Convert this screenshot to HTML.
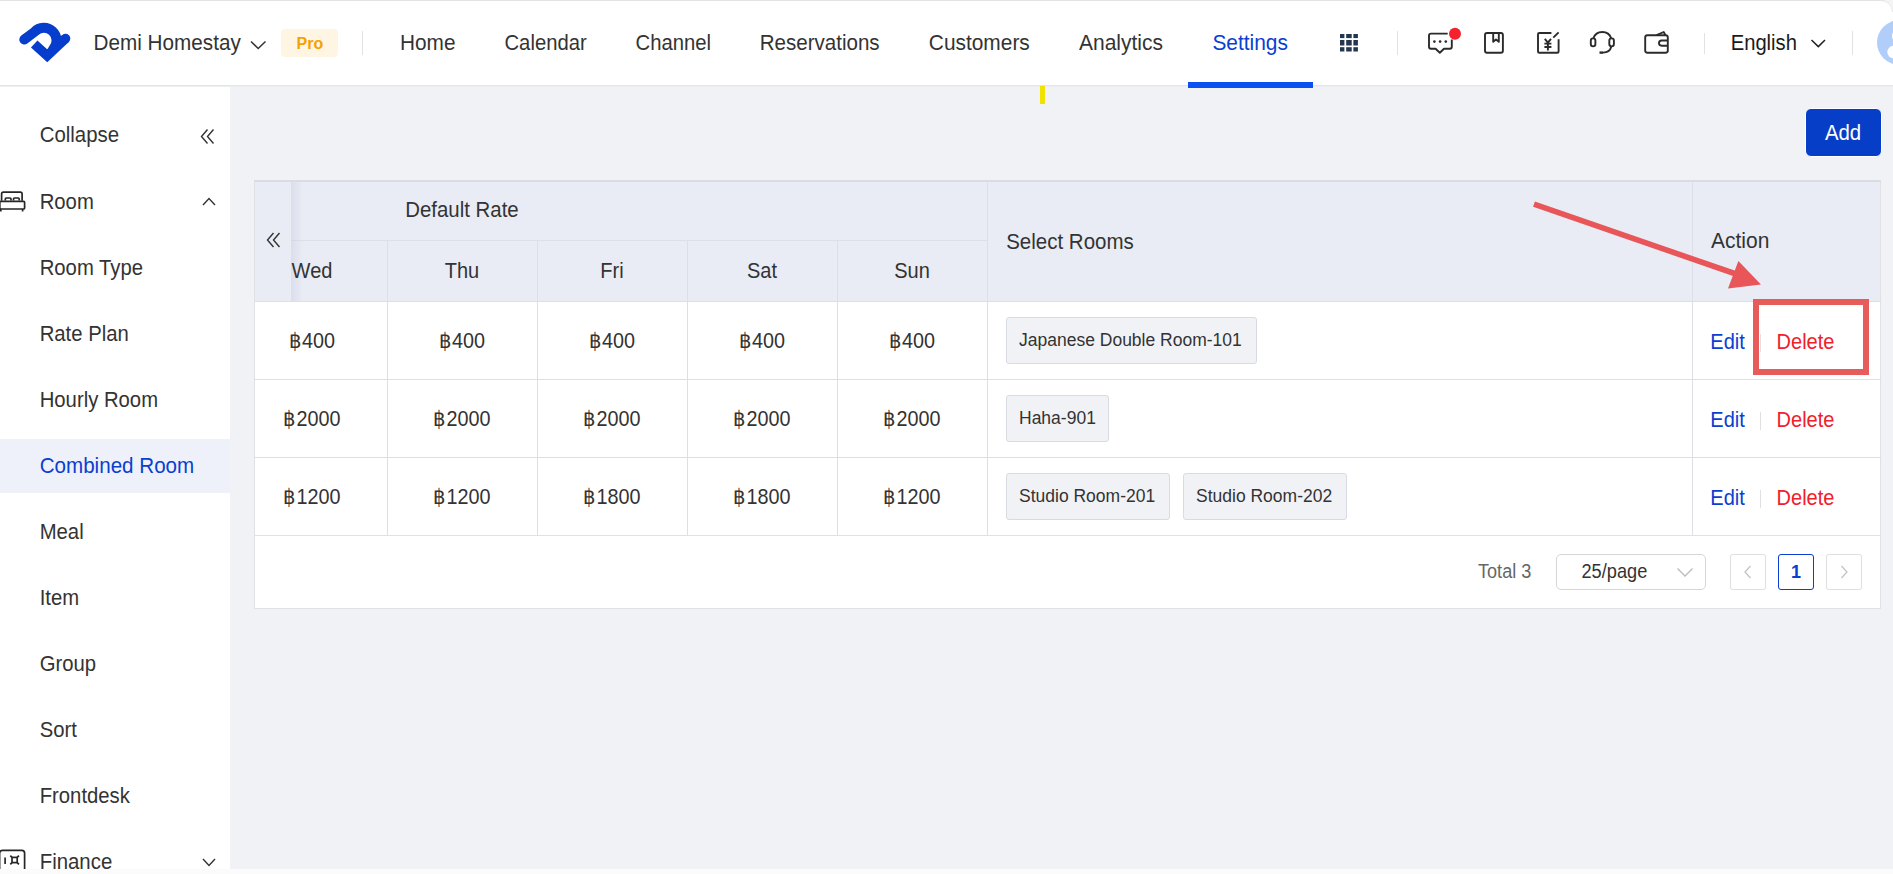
<!DOCTYPE html>
<html><head><meta charset="utf-8"><style>
html,body{margin:0;padding:0;}
body{width:1893px;height:874px;overflow:hidden;position:relative;background:#f1f2f6;font-family:"Liberation Sans", sans-serif;}
.t{position:absolute;white-space:nowrap;}
.r{position:absolute;}
svg.r{overflow:visible;}
</style></head><body>
<div class="r" style="left:0px;top:0px;width:1893px;height:87px;background:#fff;"></div>
<div class="r" style="left:0px;top:0px;width:1893px;height:1px;background:#e3e3e3;"></div>
<div class="r" style="left:0px;top:85px;width:1893px;height:1px;background:#e4e5e9;"></div>
<div class="r" style="left:0px;top:86px;width:1893px;height:1px;background:#eceef2;"></div>
<svg class="r" style="left:1873px;top:0px" width="20" height="20" viewBox="0 0 20 20"><path d="M8 0 A12 12 0 0 1 20 12 L20 0 Z" fill="#f4f4f4"/><path d="M8 0.5 A11.5 11.5 0 0 1 19.5 12" fill="none" stroke="#e6e6e6" stroke-width="1"/></svg>
<svg class="r" style="left:14px;top:18px" width="64" height="50" viewBox="0 0 64 50"><g fill="none" stroke="#063dcc" stroke-width="9.6">
<path d="M10.3 21.6 L20.5 13.9 A12.7 12.7 0 0 1 39.2 31.1" stroke-linecap="round" stroke-width="10"/>
<path d="M20.2 26 L33.2 37.8 L51.5 20.6" stroke-linecap="butt" stroke-linejoin="miter"/>
<circle cx="51.5" cy="20.6" r="4.8" fill="#063dcc" stroke="none"/>
</g></svg>
<div class="t" style="left:93.6px;top:30.18px;font-size:20.7px;line-height:25px;color:#333;font-weight:normal;transform:scaleY(1.07);transform-origin:0 19.67px;">Demi Homestay</div>
<svg class="r" style="left:250px;top:40px" width="17" height="10" viewBox="0 0 17 10"><path d="M1 1.5 L8.2 8.5 L15.5 1.5" fill="none" stroke="#333" stroke-width="1.5"/></svg>
<div class="r" style="left:281px;top:29px;width:57px;height:28px;background:#fff5e3;border-radius:4px;"></div>
<div class="t" style="left:296.5px;top:33.66px;font-size:16px;line-height:19px;color:#f5a200;font-weight:bold;transform:scaleY(1.07);transform-origin:0 15.04px;">Pro</div>
<div class="r" style="left:362px;top:31px;width:1px;height:24px;background:#e2e2e2;"></div>
<div class="t" style="left:400px;top:30.14px;font-size:20.8px;line-height:25px;color:#333;font-weight:normal;transform:scaleY(1.07);transform-origin:0 19.71px;">Home</div>
<div class="t" style="left:504.5px;top:30.83px;font-size:20.25px;line-height:24px;color:#333;font-weight:normal;transform:scaleY(1.07);transform-origin:0 19.02px;">Calendar</div>
<div class="t" style="left:635.5px;top:30.82px;font-size:20.3px;line-height:24px;color:#333;font-weight:normal;transform:scaleY(1.07);transform-origin:0 19.03px;">Channel</div>
<div class="t" style="left:759.7px;top:30.23px;font-size:20.56px;line-height:25px;color:#333;font-weight:normal;transform:scaleY(1.07);transform-origin:0 19.62px;">Reservations</div>
<div class="t" style="left:928.8px;top:30.11px;font-size:20.9px;line-height:25px;color:#333;font-weight:normal;transform:scaleY(1.07);transform-origin:0 19.74px;">Customers</div>
<div class="t" style="left:1079px;top:30.08px;font-size:20.99px;line-height:25px;color:#333;font-weight:normal;transform:scaleY(1.07);transform-origin:0 19.77px;">Analytics</div>
<div class="t" style="left:1212.4px;top:30.11px;font-size:20.9px;line-height:25px;color:#0a40d4;font-weight:normal;transform:scaleY(1.07);transform-origin:0 19.74px;">Settings</div>
<div class="r" style="left:1188px;top:82px;width:125px;height:6px;background:#0c4ff2;"></div>
<div class="r" style="left:1040px;top:85.5px;width:5px;height:18px;background:#f0e200;"></div>
<svg class="r" style="left:1340px;top:34.2px" width="18" height="18" viewBox="0 0 18 18"><rect x="0" y="0" width="4.4" height="4.1" fill="#22364f"/><rect x="0" y="6" width="4.4" height="5.5" fill="#22364f"/><rect x="0" y="13.2" width="4.4" height="4.3" fill="#22364f"/><rect x="6.2" y="0" width="5.5" height="4.1" fill="#22364f"/><rect x="6.2" y="6" width="5.5" height="5.5" fill="#22364f"/><rect x="6.2" y="13.2" width="5.5" height="4.3" fill="#22364f"/><rect x="13.4" y="0" width="4.5" height="4.1" fill="#22364f"/><rect x="13.4" y="6" width="4.5" height="5.5" fill="#22364f"/><rect x="13.4" y="13.2" width="4.5" height="4.3" fill="#22364f"/></svg>
<div class="r" style="left:1397px;top:31px;width:1px;height:24px;background:#e2e2e2;"></div>
<svg class="r" style="left:1425px;top:25px" width="40" height="32" viewBox="0 0 40 32"><g fill="none" stroke="#2b2b2b" stroke-width="1.9" stroke-linejoin="round">
<path d="M22.7 8.6 L6 8.6 Q4 8.6 4 10.6 L4 21.8 Q4 23.8 6 23.8 L10.6 23.8 L14.8 27.8 L19 23.8 L24.8 23.8 Q26.8 23.8 26.8 21.8 L26.8 14.6"/>
</g>
<circle cx="9.4" cy="16.6" r="1.3" fill="#2b2b2b"/><circle cx="15.1" cy="16.6" r="1.3" fill="#2b2b2b"/><circle cx="20.8" cy="16.6" r="1.3" fill="#2b2b2b"/>
<circle cx="30" cy="8.8" r="6" fill="#f5222d"/></svg>
<svg class="r" style="left:1480px;top:28px" width="28" height="30" viewBox="0 0 28 30"><g fill="none" stroke="#2b2b2b" stroke-width="1.9" stroke-linejoin="round">
<rect x="5" y="5" width="17.9" height="19.7" rx="2"/>
<path d="M13.2 5 L13.2 13.8 L16 11.6 L18.8 13.8 L18.8 5"/>
</g></svg>
<svg class="r" style="left:1533px;top:28px" width="30" height="30" viewBox="0 0 30 30"><g fill="none" stroke="#2b2b2b" stroke-width="1.9" stroke-linejoin="round" stroke-linecap="butt">
<path d="M18.4 5 L6.3 5 Q5 5 5 6.3 L5 23.5 Q5 24.8 6.3 24.8 L24.3 24.8 Q25.6 24.8 25.6 23.5 L25.6 11.3"/>
<path d="M20.3 9.6 L25.6 4.3"/>
<path d="M11.8 10.8 L14.9 14.6 L18 10.8 M14.9 14.6 L14.9 22.6 M11.4 15.6 L18.4 15.6 M11.4 19 L18.4 19"/>
</g></svg>
<svg class="r" style="left:1586px;top:28px" width="32" height="30" viewBox="0 0 32 30"><g fill="none" stroke="#2b2b2b" stroke-width="1.9" stroke-linejoin="round">
<path d="M7.3 10.5 A9.5 9.5 0 0 1 25.3 10.5"/>
<rect x="4.8" y="10.4" width="4.6" height="8" rx="2.3"/>
<rect x="23.3" y="10.4" width="4.6" height="8" rx="2.3"/>
<path d="M25.3 18.5 Q24 24.4 17 24.6"/>
<path d="M13.5 24.6 L17 24.6" stroke-width="2.4"/>
</g></svg>
<svg class="r" style="left:1641px;top:28px" width="30" height="30" viewBox="0 0 30 30"><g fill="none" stroke="#2b2b2b" stroke-width="1.9" stroke-linejoin="round">
<rect x="4.2" y="7.2" width="22.6" height="17.6" rx="2.2"/>
<path d="M26.8 12.5 L20.6 12.5 A2.6 2.6 0 0 0 20.6 17.7 L26.8 17.7"/>
<path d="M15.6 7.2 L22.7 4 L24.5 7.2"/>
</g></svg>
<div class="r" style="left:1704px;top:33px;width:1px;height:21px;background:#e2e2e2;"></div>
<div class="t" style="left:1730.7px;top:30.90px;font-size:20.2px;line-height:24px;color:#1a1a1a;font-weight:normal;transform:scaleY(1.07);transform-origin:0 19.00px;">English</div>
<svg class="r" style="left:1810px;top:38px" width="17" height="10" viewBox="0 0 17 10"><path d="M1.5 2 L8.3 8.6 L15 2" fill="none" stroke="#222" stroke-width="1.5"/></svg>
<div class="r" style="left:1852px;top:31px;width:1px;height:24px;background:#e2e2e2;"></div>
<svg class="r" style="left:1877px;top:20px" width="16" height="45" viewBox="0 0 16 45"><circle cx="22.3" cy="22.5" r="22.3" fill="#b1cefa"/><circle cx="22.5" cy="16" r="7.5" fill="#fff"/><rect x="10.3" y="25.8" width="26" height="12.6" rx="6.3" fill="#fff"/></svg>
<div class="r" style="left:0px;top:87px;width:230px;height:782px;background:#fff;"></div>
<div class="r" style="left:0px;top:439px;width:230px;height:54px;background:#eef1fa;"></div>
<div class="t" style="left:39.7px;top:123.43px;font-size:20.4px;line-height:24px;color:#333;font-weight:normal;transform:scaleY(1.07);transform-origin:0 19.07px;">Collapse</div>
<svg class="r" style="left:198px;top:126px" width="20" height="20" viewBox="0 0 20 20"><path d="M9.5 3.5 L3.5 10.5 L9.5 17.5 M15.5 3.5 L9.5 10.5 L15.5 17.5" fill="none" stroke="#333" stroke-width="1.4"/></svg>
<svg class="r" style="left:-2px;top:188px" width="30" height="26" viewBox="0 0 30 26"><g fill="none" stroke="#262626" stroke-width="1.7">
<path d="M3.6 12.8 L3.6 6 Q3.6 4.2 5.4 4.2 L22.3 4.2 Q24.1 4.2 24.1 6 L24.1 12.8"/>
<path d="M7.3 12.6 L7.3 11 Q7.3 10 8.3 10 L12 10 Q13 10 13 11 L13 12.6 M15.5 12.6 L15.5 11 Q15.5 10 16.5 10 L20.2 10 Q21.2 10 21.2 11 L21.2 12.6"/>
<rect x="1.8" y="13.4" width="24.8" height="7.6" rx="1"/>
<path d="M2.8 21 L2.8 23.6 M24.6 21 L24.6 23.6"/>
</g></svg>
<div class="t" style="left:39.7px;top:189.77px;font-size:20.3px;line-height:24px;color:#333;font-weight:normal;transform:scaleY(1.07);transform-origin:0 19.03px;">Room</div>
<svg class="r" style="left:200px;top:194px" width="18" height="14" viewBox="0 0 18 14"><path d="M3 11 L9 4.6 L15 11" fill="none" stroke="#333" stroke-width="1.4"/></svg>
<div class="t" style="left:39.7px;top:255.67px;font-size:20.3px;line-height:24px;color:#333;font-weight:normal;transform:scaleY(1.07);transform-origin:0 19.03px;">Room Type</div>
<div class="t" style="left:39.7px;top:321.67px;font-size:20.3px;line-height:24px;color:#333;font-weight:normal;transform:scaleY(1.07);transform-origin:0 19.03px;">Rate Plan</div>
<div class="t" style="left:39.7px;top:387.67px;font-size:20.3px;line-height:24px;color:#333;font-weight:normal;transform:scaleY(1.07);transform-origin:0 19.03px;">Hourly Room</div>
<div class="t" style="left:39.7px;top:453.06px;font-size:20.6px;line-height:25px;color:#0a3fcf;font-weight:normal;transform:scaleY(1.07);transform-origin:0 19.64px;">Combined Room</div>
<div class="t" style="left:39.7px;top:519.67px;font-size:20.3px;line-height:24px;color:#333;font-weight:normal;transform:scaleY(1.07);transform-origin:0 19.03px;">Meal</div>
<div class="t" style="left:39.7px;top:585.67px;font-size:20.3px;line-height:24px;color:#333;font-weight:normal;transform:scaleY(1.07);transform-origin:0 19.03px;">Item</div>
<div class="t" style="left:39.7px;top:651.67px;font-size:20.3px;line-height:24px;color:#333;font-weight:normal;transform:scaleY(1.07);transform-origin:0 19.03px;">Group</div>
<div class="t" style="left:39.7px;top:717.67px;font-size:20.3px;line-height:24px;color:#333;font-weight:normal;transform:scaleY(1.07);transform-origin:0 19.03px;">Sort</div>
<div class="t" style="left:39.7px;top:783.67px;font-size:20.3px;line-height:24px;color:#333;font-weight:normal;transform:scaleY(1.07);transform-origin:0 19.03px;">Frontdesk</div>
<svg class="r" style="left:-2px;top:848px" width="30" height="24" viewBox="0 0 30 24"><g fill="none" stroke="#262626" stroke-width="1.7">
<path d="M1.6 25 L1.6 5.2 Q1.6 2.4 4.4 2.4 L23.8 2.4 Q26.6 2.4 26.6 5.2 L26.6 25"/>
<path d="M7.1 9.6 L7.1 16"/>
<rect x="14" y="9.4" width="5.2" height="5.2"/>
<path d="M12.3 7.6 L14 9.4 M19.2 9.4 L20.9 7.6 M12.3 16.4 L14 14.6 M19.2 14.6 L20.9 16.4"/>
</g></svg>
<div class="t" style="left:39.7px;top:849.63px;font-size:20.4px;line-height:24px;color:#333;font-weight:normal;transform:scaleY(1.07);transform-origin:0 19.07px;">Finance</div>
<svg class="r" style="left:200px;top:855px" width="18" height="14" viewBox="0 0 18 14"><path d="M3 4 L9 10.4 L15 4" fill="none" stroke="#333" stroke-width="1.4"/></svg>
<div class="r" style="left:0px;top:869px;width:1893px;height:5px;background:#fbfbfb;"></div>
<div class="r" style="left:1805px;top:108px;width:77px;height:49px;background:#073ec8;border-radius:6px;border:1px solid #fff;box-sizing:border-box;"></div>
<div class="t" style="left:1824.9px;top:120.93px;font-size:20.4px;line-height:24px;color:#fff;font-weight:normal;transform:scaleY(1.07);transform-origin:0 19.07px;">Add</div>
<div class="r" style="left:254px;top:180px;width:1627px;height:429px;background:#fff;border:1px solid #dfe1e7;box-sizing:border-box;"></div>
<div class="r" style="left:255px;top:181px;width:1625px;height:121px;background:#e9ecf4;"></div>
<div class="r" style="left:254px;top:180px;width:1627px;height:2px;background:#d9dce4;"></div>
<div class="r" style="left:291px;top:240px;width:696px;height:1px;background:#dcdfe8;"></div>
<div class="r" style="left:254px;top:301px;width:1627px;height:1px;background:#dcdfe8;"></div>
<div class="r" style="left:387px;top:241px;width:1px;height:295px;background:#dcdfe8;"></div>
<div class="r" style="left:537px;top:241px;width:1px;height:295px;background:#dcdfe8;"></div>
<div class="r" style="left:687px;top:241px;width:1px;height:295px;background:#dcdfe8;"></div>
<div class="r" style="left:837px;top:241px;width:1px;height:295px;background:#dcdfe8;"></div>
<div class="r" style="left:987px;top:181px;width:1px;height:355px;background:#dcdfe8;"></div>
<div class="r" style="left:1692px;top:181px;width:1px;height:355px;background:#dcdfe8;"></div>
<div class="r" style="left:254px;top:379px;width:1627px;height:1px;background:#dcdfe8;"></div>
<div class="r" style="left:254px;top:457px;width:1627px;height:1px;background:#dcdfe8;"></div>
<div class="r" style="left:254px;top:535px;width:1627px;height:1px;background:#dfe1e6;"></div>
<div class="r" style="left:255px;top:182px;width:36px;height:119px;background:#e9ecf4;"></div>
<div class="r" style="left:291px;top:182px;width:12px;height:119px;background:linear-gradient(90deg,rgba(200,206,225,0.45),rgba(233,236,244,0));"></div>
<svg class="r" style="left:263px;top:230px" width="22" height="20" viewBox="0 0 22 20"><path d="M10.5 3 L4.5 10 L10.5 17 M16.5 3 L10.5 10 L16.5 17" fill="none" stroke="#333" stroke-width="1.4"/></svg>
<div class="t" style="left:405.3px;top:198.23px;font-size:20.4px;line-height:24px;color:#333;font-weight:normal;transform:scaleY(1.07);transform-origin:0 19.07px;">Default Rate</div>
<div class="t" style="left:112.0px;width:400px;text-align:center;top:259.07px;font-size:20.0px;line-height:24px;color:#333;font-weight:normal;transform:scaleY(1.07);transform-origin:0 18.93px;">Wed</div>
<div class="t" style="left:262.0px;width:400px;text-align:center;top:259.07px;font-size:20.0px;line-height:24px;color:#333;font-weight:normal;transform:scaleY(1.07);transform-origin:0 18.93px;">Thu</div>
<div class="t" style="left:412.0px;width:400px;text-align:center;top:259.07px;font-size:20.0px;line-height:24px;color:#333;font-weight:normal;transform:scaleY(1.07);transform-origin:0 18.93px;">Fri</div>
<div class="t" style="left:562.0px;width:400px;text-align:center;top:259.07px;font-size:20.0px;line-height:24px;color:#333;font-weight:normal;transform:scaleY(1.07);transform-origin:0 18.93px;">Sat</div>
<div class="t" style="left:712.0px;width:400px;text-align:center;top:259.07px;font-size:20.0px;line-height:24px;color:#333;font-weight:normal;transform:scaleY(1.07);transform-origin:0 18.93px;">Sun</div>
<div class="t" style="left:1006.2px;top:228.80px;font-size:20.5px;line-height:25px;color:#333;font-weight:normal;transform:scaleY(1.07);transform-origin:0 19.60px;">Select Rooms</div>
<div class="t" style="left:1711px;top:228.42px;font-size:21px;line-height:25px;color:#333;font-weight:normal;transform:scaleY(1.07);transform-origin:0 19.78px;">Action</div>
<div class="t" style="left:112.0px;width:400px;text-align:center;top:328.94px;font-size:19.8px;line-height:24px;color:#333;font-weight:normal;transform:scaleY(1.07);transform-origin:0 18.86px;">฿400</div>
<div class="t" style="left:262.0px;width:400px;text-align:center;top:328.94px;font-size:19.8px;line-height:24px;color:#333;font-weight:normal;transform:scaleY(1.07);transform-origin:0 18.86px;">฿400</div>
<div class="t" style="left:412.0px;width:400px;text-align:center;top:328.94px;font-size:19.8px;line-height:24px;color:#333;font-weight:normal;transform:scaleY(1.07);transform-origin:0 18.86px;">฿400</div>
<div class="t" style="left:562.0px;width:400px;text-align:center;top:328.94px;font-size:19.8px;line-height:24px;color:#333;font-weight:normal;transform:scaleY(1.07);transform-origin:0 18.86px;">฿400</div>
<div class="t" style="left:712.0px;width:400px;text-align:center;top:328.94px;font-size:19.8px;line-height:24px;color:#333;font-weight:normal;transform:scaleY(1.07);transform-origin:0 18.86px;">฿400</div>
<div class="r" style="left:1006px;top:317px;width:251px;height:47px;background:#f1f2f6;border:1px solid #d8dbe2;border-radius:3px;box-sizing:border-box;"></div>
<div class="t" style="left:1019px;top:329.74px;font-size:17.5px;line-height:21px;color:#333;font-weight:normal;transform:scaleY(1.07);transform-origin:0 16.56px;">Japanese Double Room-101</div>
<div class="t" style="left:1710.3px;top:329.67px;font-size:20.0px;line-height:24px;color:#0b3fd0;font-weight:normal;transform:scaleY(1.07);transform-origin:0 18.93px;">Edit</div>
<div class="r" style="left:1760px;top:334px;width:1px;height:18px;background:#e0e0e0;"></div>
<div class="t" style="left:1776.6px;top:329.67px;font-size:20.0px;line-height:24px;color:#f0202c;font-weight:normal;transform:scaleY(1.07);transform-origin:0 18.93px;">Delete</div>
<div class="t" style="left:112.0px;width:400px;text-align:center;top:406.94px;font-size:19.8px;line-height:24px;color:#333;font-weight:normal;transform:scaleY(1.07);transform-origin:0 18.86px;">฿2000</div>
<div class="t" style="left:262.0px;width:400px;text-align:center;top:406.94px;font-size:19.8px;line-height:24px;color:#333;font-weight:normal;transform:scaleY(1.07);transform-origin:0 18.86px;">฿2000</div>
<div class="t" style="left:412.0px;width:400px;text-align:center;top:406.94px;font-size:19.8px;line-height:24px;color:#333;font-weight:normal;transform:scaleY(1.07);transform-origin:0 18.86px;">฿2000</div>
<div class="t" style="left:562.0px;width:400px;text-align:center;top:406.94px;font-size:19.8px;line-height:24px;color:#333;font-weight:normal;transform:scaleY(1.07);transform-origin:0 18.86px;">฿2000</div>
<div class="t" style="left:712.0px;width:400px;text-align:center;top:406.94px;font-size:19.8px;line-height:24px;color:#333;font-weight:normal;transform:scaleY(1.07);transform-origin:0 18.86px;">฿2000</div>
<div class="r" style="left:1006px;top:395px;width:103px;height:47px;background:#f1f2f6;border:1px solid #d8dbe2;border-radius:3px;box-sizing:border-box;"></div>
<div class="t" style="left:1019px;top:407.74px;font-size:17.5px;line-height:21px;color:#333;font-weight:normal;transform:scaleY(1.07);transform-origin:0 16.56px;">Haha-901</div>
<div class="t" style="left:1710.3px;top:407.67px;font-size:20.0px;line-height:24px;color:#0b3fd0;font-weight:normal;transform:scaleY(1.07);transform-origin:0 18.93px;">Edit</div>
<div class="r" style="left:1760px;top:412px;width:1px;height:18px;background:#e0e0e0;"></div>
<div class="t" style="left:1776.6px;top:407.67px;font-size:20.0px;line-height:24px;color:#f0202c;font-weight:normal;transform:scaleY(1.07);transform-origin:0 18.93px;">Delete</div>
<div class="t" style="left:112.0px;width:400px;text-align:center;top:484.94px;font-size:19.8px;line-height:24px;color:#333;font-weight:normal;transform:scaleY(1.07);transform-origin:0 18.86px;">฿1200</div>
<div class="t" style="left:262.0px;width:400px;text-align:center;top:484.94px;font-size:19.8px;line-height:24px;color:#333;font-weight:normal;transform:scaleY(1.07);transform-origin:0 18.86px;">฿1200</div>
<div class="t" style="left:412.0px;width:400px;text-align:center;top:484.94px;font-size:19.8px;line-height:24px;color:#333;font-weight:normal;transform:scaleY(1.07);transform-origin:0 18.86px;">฿1800</div>
<div class="t" style="left:562.0px;width:400px;text-align:center;top:484.94px;font-size:19.8px;line-height:24px;color:#333;font-weight:normal;transform:scaleY(1.07);transform-origin:0 18.86px;">฿1800</div>
<div class="t" style="left:712.0px;width:400px;text-align:center;top:484.94px;font-size:19.8px;line-height:24px;color:#333;font-weight:normal;transform:scaleY(1.07);transform-origin:0 18.86px;">฿1200</div>
<div class="r" style="left:1006px;top:473px;width:164px;height:47px;background:#f1f2f6;border:1px solid #d8dbe2;border-radius:3px;box-sizing:border-box;"></div>
<div class="t" style="left:1019px;top:485.74px;font-size:17.5px;line-height:21px;color:#333;font-weight:normal;transform:scaleY(1.07);transform-origin:0 16.56px;">Studio Room-201</div>
<div class="r" style="left:1183px;top:473px;width:164px;height:47px;background:#f1f2f6;border:1px solid #d8dbe2;border-radius:3px;box-sizing:border-box;"></div>
<div class="t" style="left:1196px;top:485.74px;font-size:17.5px;line-height:21px;color:#333;font-weight:normal;transform:scaleY(1.07);transform-origin:0 16.56px;">Studio Room-202</div>
<div class="t" style="left:1710.3px;top:485.67px;font-size:20.0px;line-height:24px;color:#0b3fd0;font-weight:normal;transform:scaleY(1.07);transform-origin:0 18.93px;">Edit</div>
<div class="r" style="left:1760px;top:490px;width:1px;height:18px;background:#e0e0e0;"></div>
<div class="t" style="left:1776.6px;top:485.67px;font-size:20.0px;line-height:24px;color:#f0202c;font-weight:normal;transform:scaleY(1.07);transform-origin:0 18.93px;">Delete</div>
<div class="t" style="left:1478px;top:560.73px;font-size:18.1px;line-height:22px;color:#666;font-weight:normal;transform:scaleY(1.07);transform-origin:0 17.27px;">Total 3</div>
<div class="r" style="left:1556px;top:554px;width:150px;height:36px;background:#fff;border:1px solid #d6d6d6;border-radius:5px;box-sizing:border-box;"></div>
<div class="t" style="left:1581.5px;top:560.69px;font-size:18.2px;line-height:22px;color:#333;font-weight:normal;transform:scaleY(1.07);transform-origin:0 17.31px;">25/page</div>
<svg class="r" style="left:1675px;top:565px" width="20" height="14" viewBox="0 0 20 14"><path d="M2.5 3.5 L10 11 L17.5 3.5" fill="none" stroke="#bbb" stroke-width="1.3"/></svg>
<div class="r" style="left:1730px;top:554px;width:36px;height:36px;background:#fff;border:1px solid #dedede;border-radius:3px;box-sizing:border-box;"></div>
<svg class="r" style="left:1740px;top:562px" width="16" height="20" viewBox="0 0 16 20"><path d="M10.5 4 L5 10 L10.5 16" fill="none" stroke="#c4c4c4" stroke-width="1.3"/></svg>
<div class="r" style="left:1778px;top:554px;width:36px;height:36px;background:#fff;border:1.5px solid #0b3fd0;border-radius:3px;box-sizing:border-box;"></div>
<div class="t" style="left:1596.0px;width:400px;text-align:center;top:560.76px;font-size:18px;line-height:22px;color:#0b3fd0;font-weight:bold;transform:scaleY(1.07);transform-origin:0 17.24px;">1</div>
<div class="r" style="left:1826px;top:554px;width:36px;height:36px;background:#fff;border:1px solid #dedede;border-radius:3px;box-sizing:border-box;"></div>
<svg class="r" style="left:1836px;top:562px" width="16" height="20" viewBox="0 0 16 20"><path d="M5.5 4 L11 10 L5.5 16" fill="none" stroke="#c4c4c4" stroke-width="1.3"/></svg>
<svg class="r" style="left:1520px;top:190px" width="260" height="110" viewBox="0 0 260 110"><line x1="14" y1="14.2" x2="216" y2="84" stroke="#e85659" stroke-width="5.6"/>
<path d="M218.4 71 L241 94.5 L208 98.6 Z" fill="#e85659"/></svg>
<div class="r" style="left:1753px;top:299px;width:116px;height:76px;border:6px solid #e85b5b;box-sizing:border-box;"></div>
</body></html>
